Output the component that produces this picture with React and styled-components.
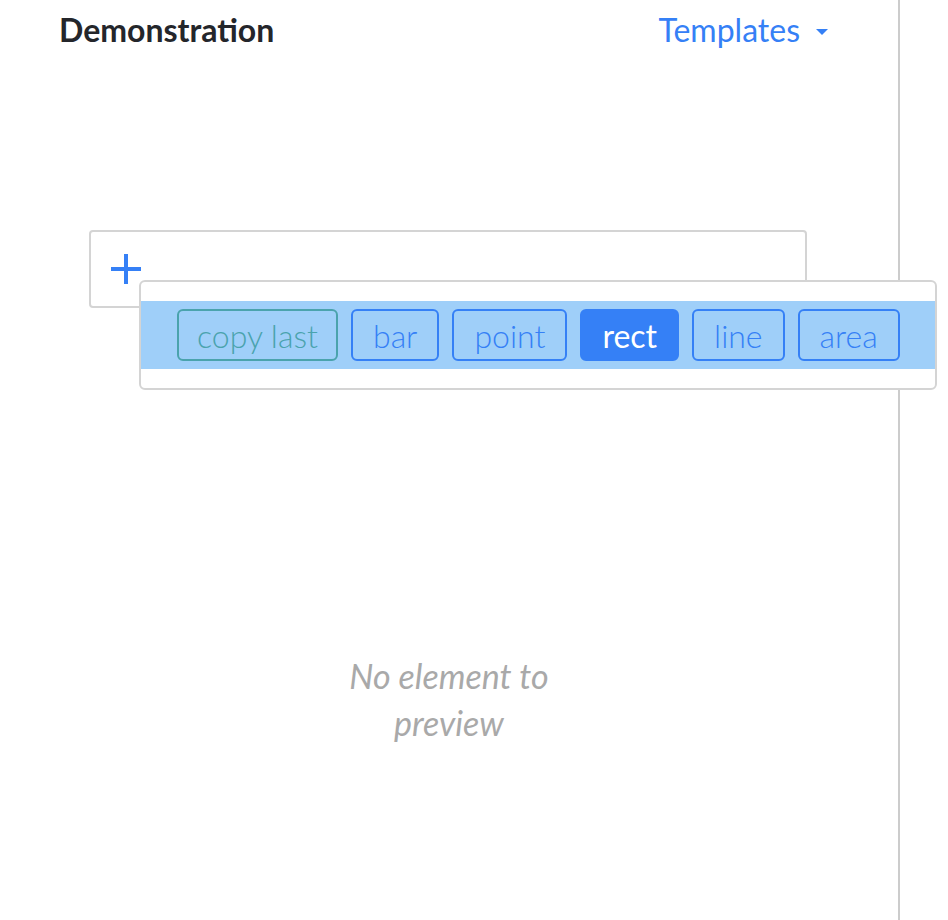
import React from 'react';
import styled, { createGlobalStyle } from 'styled-components';

const GlobalStyle = createGlobalStyle`
  html, body {
    margin: 0;
    padding: 0;
    background: #fff;
    font-family: Lato, "Open Sans", sans-serif;
  }
`;

const Page = styled.div`
  display: flex;
  height: 920px;
  width: 948px;
`;

const Main = styled.div`
  width: 898px;
  border-right: 2px solid #cccccc;
  display: flex;
  flex-direction: column;
`;

const Header = styled.div`
  display: flex;
  justify-content: space-between;
  align-items: baseline;
  padding: 10px 70px 0 59px;
`;

const Title = styled.h1`
  margin: 0;
  font-size: 32px;
  font-weight: 700;
  color: #24262b;
`;

const TemplatesButton = styled.button`
  display: flex;
  align-items: center;
  gap: 16px;
  border: none;
  background: none;
  padding: 0;
  font-family: inherit;
  font-size: 32px;
  color: #3580f6;
  cursor: pointer;
`;

const Caret = styled.span`
  width: 0;
  height: 0;
  border-left: 6px solid transparent;
  border-right: 6px solid transparent;
  border-top: 6px solid #3580f6;
  margin-top: 4px;
`;

const AddBox = styled.div`
  position: relative;
  box-sizing: border-box;
  margin: 181px 0 0 89px;
  width: 718px;
  height: 78px;
  border: 2px solid #d4d4d4;
  border-radius: 4px;
  display: flex;
  align-items: center;
  padding-left: 19px;
`;

const Popover = styled.div`
  position: absolute;
  left: 48px;
  top: 48px;
  width: 794px;
  padding: 19px 0 19px;
  background: #fff;
  border: 2px solid #d4d4d4;
  border-radius: 6px;
  z-index: 2;
`;

const Band = styled.div`
  display: flex;
  gap: 13px;
  background: #9fcff9;
  padding: 8px 36px;
`;

const Chip = styled.button`
  flex-shrink: 0;
  white-space: nowrap;
  height: 52px;
  padding: 0 ${({ $teal }) => ($teal ? '18px' : '20px')};
  border-radius: 6px;
  border: 2px solid ${({ $teal }) => ($teal ? '#4aa3ad' : '#3580f6')};
  background: ${({ $active }) => ($active ? '#3580f6' : 'transparent')};
  color: ${({ $active, $teal }) => ($active ? '#fff' : $teal ? '#4aa3ad' : '#3580f6')};
  font-family: inherit;
  font-size: 32px;
  font-weight: ${({ $active }) => ($active ? 400 : 300)};
  cursor: pointer;
`;

const Empty = styled.div`
  margin: 344px auto 0;
  text-align: center;
  width: 224px;
  font-size: 34px;
  font-style: italic;
  line-height: 47px;
  color: #a9a9a9;
`;

const PlusIcon = () => (
  <svg width="32" height="32" viewBox="0 0 32 32">
    <path d="M16 1v30M1 16h30" stroke="#3580f6" strokeWidth="4" fill="none" />
  </svg>
);

const marks = ['bar', 'point', 'rect', 'line', 'area'];

export default function App() {
  return (
    <Page>
      <GlobalStyle />
      <Main>
        <Header>
          <Title>Demonstration</Title>
          <TemplatesButton>
            Templates
            <Caret />
          </TemplatesButton>
        </Header>
        <AddBox>
          <PlusIcon />
          <Popover>
            <Band>
              <Chip $teal>copy last</Chip>
              {marks.map((m) => (
                <Chip key={m} $active={m === 'rect'}>{m}</Chip>
              ))}
            </Band>
          </Popover>
        </AddBox>
        <Empty>No element to preview</Empty>
      </Main>
    </Page>
  );
}
